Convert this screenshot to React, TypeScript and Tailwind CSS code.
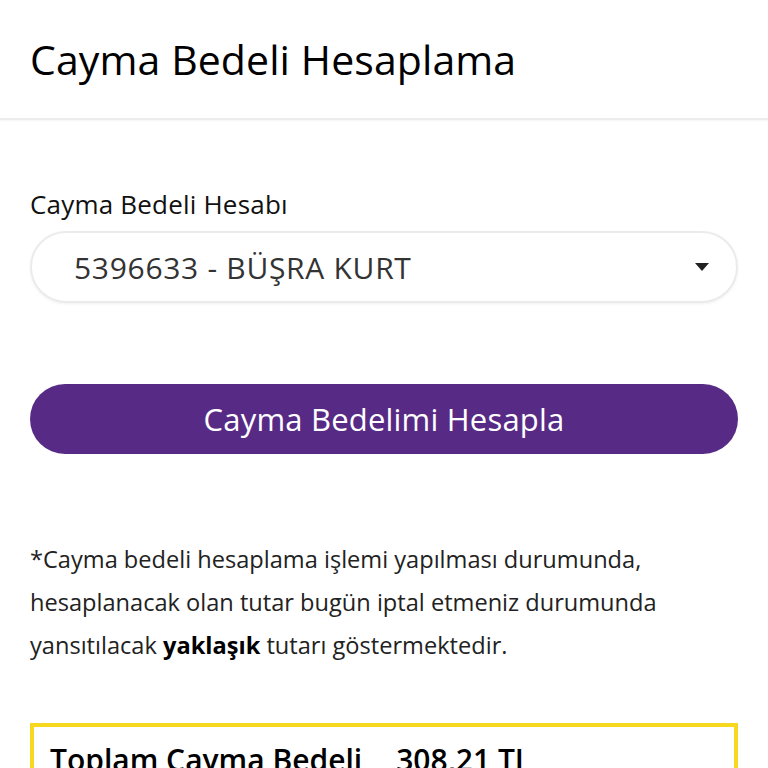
export default function App() {
  return (
    <div className="min-h-[768px] bg-white font-['Open_Sans',sans-serif] text-[#111]">
      <div className="h-[120px] flex items-center px-[30px] border-b-2 border-[#ececec] shadow-[0_1px_2px_rgba(0,0,0,0.04)]">
        <h1 className="text-[41px] leading-none tracking-[0.1px] text-black">Cayma Bedeli Hesaplama</h1>
      </div>

      <div className="px-[30px] pt-[67px]">
        <label className="block text-[26px] leading-[35px] tracking-[0.2px] text-[#111]">Cayma Bedeli Hesabı</label>
        <div className="mt-[9px] h-[72px] rounded-full border-2 border-[#ebebeb] shadow-[0_1px_3px_rgba(0,0,0,0.06)] flex items-center justify-between pl-[42px] pr-[26px]">
          <span className="text-[30px] tracking-[0.7px] text-[#333]">5396633 - BÜŞRA KURT</span>
          <svg width="16" height="9" viewBox="0 0 16 9">
            <path d="M1 0 L15 0 L8 8 Z" fill="#222" />
          </svg>
        </div>

        <button className="mt-[81px] w-full h-[70px] rounded-full bg-[#572b85] text-white text-[31px] tracking-[0.2px]">
          Cayma Bedelimi Hesapla
        </button>

        <p className="mt-[84px] text-[23.6px] leading-[43px] text-[#222]">
          *Cayma bedeli hesaplama işlemi yapılması durumunda,
          <br />
          hesaplanacak olan tutar bugün iptal etmeniz durumunda
          <br />
          yansıtılacak <b className="font-bold text-black">yaklaşık</b> tutarı göstermektedir.
        </p>

        <div className="mt-[56px] border-4 border-[#f6d81f] px-[16px] pt-[12px] pb-[20px]">
          <div className="flex items-baseline gap-[34px] text-[30px] font-semibold text-black leading-[42px]">
            <span>Toplam Cayma Bedeli</span>
            <span>308,21 TL</span>
          </div>
        </div>
      </div>
    </div>
  );
}
